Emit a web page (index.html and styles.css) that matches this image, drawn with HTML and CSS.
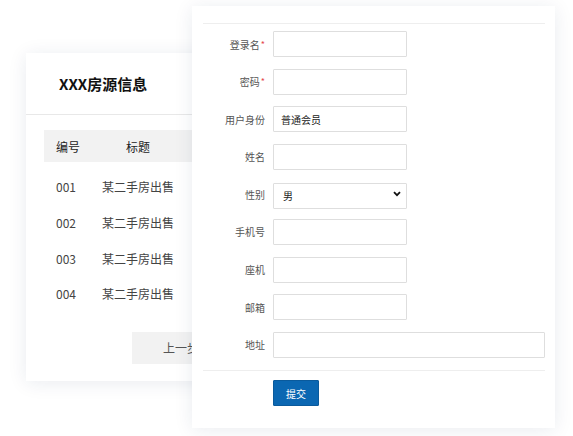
FILE: index.html
```html
<!DOCTYPE html>
<html lang="zh-CN">
<head>
<meta charset="utf-8">
<title>XXX房源信息</title>
<link rel="stylesheet" href="styles.css">
</head>
<body>
<div class="stage">
  <section class="card list-card">
    <header class="list-head">XXX房源信息</header>
    <div class="table">
      <div class="tr th"><div class="c1">编号</div><div class="c2">标题</div><div class="c3"></div></div>
      <div class="tbody">
        <div class="tr"><div class="c1">001</div><div class="c2">某二手房出售</div><div class="c3"></div></div>
        <div class="tr"><div class="c1">002</div><div class="c2">某二手房出售</div><div class="c3"></div></div>
        <div class="tr"><div class="c1">003</div><div class="c2">某二手房出售</div><div class="c3"></div></div>
        <div class="tr"><div class="c1">004</div><div class="c2">某二手房出售</div><div class="c3"></div></div>
      </div>
    </div>
    <div class="pager"><button class="prev">上一步</button></div>
  </section>

  <section class="card form-card">
    <form class="form">
      <div class="row"><label class="lbl">登录名<span class="req">*</span></label><input class="inp" type="text"></div>
      <div class="row"><label class="lbl">密码<span class="req">*</span></label><input class="inp" type="password"></div>
      <div class="row"><label class="lbl">用户身份</label><input class="inp" type="text" value="普通会员"></div>
      <div class="row"><label class="lbl">姓名</label><input class="inp" type="text"></div>
      <div class="row"><label class="lbl">性别</label>
        <div class="sel-wrap">
          <select class="inp sel"><option>男</option><option>女</option></select>
          <svg class="chev" width="8" height="6" viewBox="0 0 8 6"><path d="M1 1.2 L4 4.2 L7 1.2" fill="none" stroke="#111" stroke-width="1.8"/></svg>
        </div>
      </div>
      <div class="row"><label class="lbl">手机号</label><input class="inp" type="text"></div>
      <div class="row"><label class="lbl">座机</label><input class="inp" type="text"></div>
      <div class="row"><label class="lbl">邮箱</label><input class="inp" type="text"></div>
      <div class="row"><label class="lbl">地址</label><input class="inp wide" type="text"></div>
      <div class="actions"><button type="button" class="submit">提交</button></div>
    </form>
  </section>
</div>
</body>
</html>
```
FILE: styles.css
```css
html, body {
  margin: 0;
  padding: 0;
  background: #fff;
  font-family: "Noto Sans CJK SC", "Noto Sans", sans-serif;
}
.stage {
  position: relative;
  width: 573px;
  height: 436px;
  overflow: hidden;
}
.card {
  position: absolute;
  background: #fff;
  box-shadow: 0 2px 18px rgba(20, 40, 90, 0.09);
  box-sizing: border-box;
}
.list-card {
  left: 26px;
  top: 53px;
  width: 260px;
  height: 328px;
}
.list-head {
  height: 62px;
  box-sizing: border-box;
  border-bottom: 1px solid #e8e8e8;
  padding-left: 33px;
  font-size: 15px;
  font-weight: bold;
  color: #111;
  display: flex;
  align-items: center;
}
.table {
  margin: 15px 0 0 18px;
  font-size: 12px;
  color: #444;
}
.tr {
  display: flex;
  align-items: center;
  height: 35.7px;
}
.th {
  height: 32px;
  background: #f2f2f2;
  color: #222;
}
.tbody {
  padding-top: 7px;
}
.c1 {
  width: 58px;
  padding-left: 12px;
  box-sizing: border-box;
}
.c2 {
  width: 72px;
  text-align: center;
}
.c3 {
  flex: 1;
}
.pager {
  margin-top: 20px;
  padding-left: 106px;
}
.prev {
  width: 110px;
  height: 32px;
  border: none;
  background: #f2f2f2;
  color: #555;
  font-family: inherit;
  font-size: 12px;
  text-align: left;
  padding-left: 31px;
}
.form-card {
  left: 192px;
  top: 6px;
  width: 363px;
  height: 422px;
  padding: 17px 10px 0 11px;
}
.form {
  border-top: 1px solid #eeeeee;
  padding-top: 7px;
  display: flex;
  flex-direction: column;
  gap: 11.6px;
}
.row {
  display: flex;
  align-items: center;
  height: 26px;
}
.lbl {
  width: 62px;
  margin-right: 8px;
  text-align: right;
  font-size: 10px;
  color: #555;
}
.req {
  color: #e5484d;
  font-size: 9px;
  position: relative;
  top: -1px;
  margin-left: 1px;
}
.inp {
  width: 134px;
  height: 26px;
  box-sizing: border-box;
  border: 1px solid #dedede;
  border-radius: 1px;
  background: #fff;
  padding: 0 7px;
  font-family: inherit;
  font-size: 10px;
  color: #222;
  outline: none;
}
.wide {
  width: 272px;
}
.sel-wrap {
  position: relative;
  width: 134px;
  height: 26px;
}
.sel {
  -webkit-appearance: none;
  appearance: none;
  padding-left: 9px;
}
.chev {
  position: absolute;
  right: 6px;
  top: 10px;
  pointer-events: none;
}
.actions {
  border-top: 1px solid #eeeeee;
  margin-top: 0.4px;
  padding-top: 8px;
  padding-left: 70px;
}
.submit {
  width: 46px;
  height: 26px;
  border: 1px solid #0a5a9c;
  background: #0b67b2;
  color: #fff;
  font-family: inherit;
  font-size: 10px;
  border-radius: 1px;
  padding: 0;
}
```
